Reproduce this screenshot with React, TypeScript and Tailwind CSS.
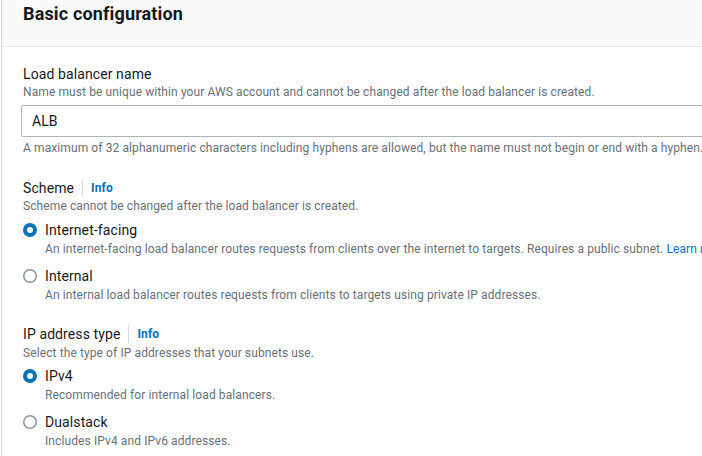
import React from "react";

const font = { fontFamily: "Roboto, 'Open Sans', Arial, sans-serif" };

function Radio({ checked }: { checked: boolean }) {
  return (
    <svg width="14" height="14" viewBox="0 0 14 14" className="shrink-0">
      {checked ? (
        <circle cx="7" cy="7" r="5" fill="#ffffff" stroke="#0073bb" strokeWidth="4" />
      ) : (
        <circle cx="7" cy="7" r="6.25" fill="#ffffff" stroke="#879596" strokeWidth="1.5" />
      )}
    </svg>
  );
}

function RadioItem({
  checked,
  label,
  desc,
  className,
}: {
  checked: boolean;
  label: string;
  desc: React.ReactNode;
  className?: string;
}) {
  return (
    <div className={className}>
      <div className="flex items-center gap-[8px] pl-[21px]">
        <Radio checked={checked} />
        <span className="text-[14px] leading-[20px] text-[#16191f] whitespace-nowrap tracking-[0.1px]">{label}</span>
      </div>
      <div className="pl-[43px] mt-[1px] text-[12px] leading-[16px] text-[#687078] whitespace-nowrap tracking-[0.1px]">{desc}</div>
    </div>
  );
}

function LabelInfo({ label }: { label: string }) {
  return (
    <div className="flex items-center text-[14px] leading-[20px] text-[#16191f] tracking-[0.1px]">
      <span>{label}</span>
      <span className="mx-[8px] h-[18px] w-px bg-[#d5dbdb]" />
      <span className="font-bold text-[12px] text-[#0073bb]">Info</span>
    </div>
  );
}

export default function App() {
  return (
    <div className="w-[702px] h-[456px] overflow-hidden bg-white" style={font}>
      <div className="ml-[1px] border-l border-[#d5dbdb] w-[800px] h-[456px]">
        <div className="h-[47px] bg-[#fafafa] border-b border-[#eaeded] pl-[21px] pt-[3px]">
          <h2 className="text-[18px] leading-[22px] font-bold text-[#16191f] tracking-[0.15px]">Basic configuration</h2>
        </div>
        <div className="pl-[21px]">
          <div className="mt-[17px] text-[14px] leading-[20px] text-[#16191f] tracking-[0.1px]">Load balancer name</div>
          <div className="text-[12px] leading-[16px] text-[#687078] whitespace-nowrap tracking-[0.1px]">
            Name must be unique within your AWS account and cannot be changed after the load balancer is created.
          </div>
          <div className="mt-[5px] ml-[-2px] h-[32px] w-[760px] border border-[#aab7b8] rounded-[2px] flex items-center pl-[10px] text-[14px] text-[#16191f]">
            ALB
          </div>
          <div className="mt-[3px] text-[12px] leading-[16px] text-[#687078] whitespace-nowrap tracking-[0.1px]">
            A maximum of 32 alphanumeric characters including hyphens are allowed, but the name must not begin or end with a hyphen.
          </div>

          <div className="mt-[22px]">
            <LabelInfo label="Scheme" />
          </div>
          <div className="text-[12px] leading-[16px] text-[#687078] whitespace-nowrap tracking-[0.1px]">
            Scheme cannot be changed after the load balancer is created.
          </div>
        </div>
        <RadioItem
          className="mt-[6px]"
          checked
          label="Internet-facing"
          desc={
            <>
              An internet-facing load balancer routes requests from clients over the internet to targets. Requires a public subnet.{" "}
              <span className="text-[#0073bb]">Learn more</span>
            </>
          }
        />
        <RadioItem
          className="mt-[9px]"
          checked={false}
          label="Internal"
          desc="An internal load balancer routes requests from clients to targets using private IP addresses."
        />
        <div className="pl-[21px] mt-[21px]">
          <LabelInfo label="IP address type" />
          <div className="mt-[1px] text-[12px] leading-[16px] text-[#687078] whitespace-nowrap tracking-[0.1px]">
            Select the type of IP addresses that your subnets use.
          </div>
        </div>
        <RadioItem
          className="mt-[5px]"
          checked
          label="IPv4"
          desc="Recommended for internal load balancers."
        />
        <RadioItem
          className="mt-[9px]"
          checked={false}
          label="Dualstack"
          desc="Includes IPv4 and IPv6 addresses."
        />
      </div>
    </div>
  );
}
